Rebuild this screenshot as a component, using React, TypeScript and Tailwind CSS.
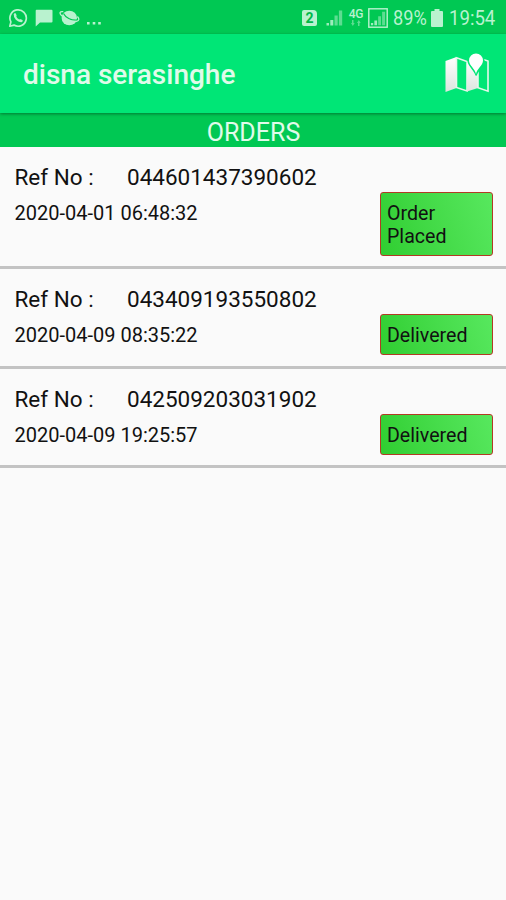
import React from 'react';

interface Order {
  refNo: string;
  date: string;
  status: string;
}

const orders: Order[] = [
  { refNo: '044601437390602', date: '2020-04-01 06:48:32', status: 'Order Placed' },
  { refNo: '043409193550802', date: '2020-04-09 08:35:22', status: 'Delivered' },
  { refNo: '042509203031902', date: '2020-04-09 19:25:57', status: 'Delivered' },
];

const SignalBars: React.FC = () => (
  <>
    <path d="M0.5 14H3v2.5H0.5z M4.3 11h3v5.5h-3z" fill="currentColor" opacity="0.85" />
    <path d="M8.5 6.5h3.2v10H8.5z M12.9 1.5h3.3v15h-3.3z" fill="currentColor" opacity="0.5" />
  </>
);

const StatusBar: React.FC = () => (
  <div className="flex h-[34px] items-center justify-between bg-[#00c853] pl-2 pr-[11px] pt-px text-[#b9f2cf]">
    <div className="flex items-center">
      <svg className="h-5 w-5" viewBox="0 0 20 20" fill="none" stroke="currentColor">
        <path strokeWidth="1.7" strokeLinejoin="round" d="M1.8 18.2l1.1-4.3A8.2 8.2 0 1 1 6 17.1z" />
        <path strokeWidth="2.2" strokeLinecap="round" d="M6.9 6.5c-.5 3.2 3 6.7 6.3 6.6" />
        <path strokeWidth="2.4" strokeLinecap="round" d="M7 6.6l.4 1M12.3 12.4l1.2.5" />
      </svg>
      <svg className="ml-[7px] h-[18px] w-[18px]" viewBox="0 0 18 18" fill="currentColor">
        <path d="M1.5.8h15q1 0 1 1v10.8q0 1-1 1H5L.7 17.6V1.8q0-1 .8-1z" />
      </svg>
      <svg className="ml-[6px] h-[18px] w-[21px]" viewBox="0 0 21 18">
        <ellipse cx="10.3" cy="9" rx="7.7" ry="7.3" fill="currentColor" />
        <path d="M4.5 4.5C6.5 8.8 13 12 18.5 11" fill="none" stroke="#00c853" strokeWidth="1.2" />
        <path d="M4.3 2.7C.6 2 .2 4 2.3 6.4c3.3 3.8 10.2 6.9 15.2 5.9 3-.6 2.9-2.6.9-4.8" fill="none" stroke="currentColor" strokeWidth="1.3" />
      </svg>
      <svg className="ml-[6px] mt-[12px] h-[3px] w-[16px]" viewBox="0 0 16 3" fill="currentColor">
        <path d="M1 0h2.6v2.6H1z M6.7 0h2.6v2.6H6.7z M12.2 0h2.6v2.6h-2.6z" />
      </svg>
    </div>

    <div className="flex items-center">
      <div className="mr-[9px] flex h-[16px] w-[15px] items-center justify-center rounded-[2px] rounded-tr-[4px] bg-[#b9f2cf] text-[14px] font-bold leading-none text-[#00b84a]">2</div>
      <svg className="h-[18px] w-[17px]" viewBox="0 0 17 18"><SignalBars /></svg>
      <div className="ml-[6px] flex w-[14px] flex-col items-center">
        <span className="text-[12px] font-medium leading-[11px] tracking-tight">4G</span>
        <svg className="h-[6px] w-[10px]" viewBox="0 0 10 6" fill="currentColor" opacity="0.5">
          <path d="M1 0h1.5v3h1.2L1.8 6 0 3h1zM7 6h1.5V3h1.2L7.8 0 6 3h1z" />
        </svg>
      </div>
      <svg className="ml-[5px] h-[20px] w-[20px]" viewBox="0 0 20 20">
        <rect x="0.8" y="0.8" width="18.4" height="18.4" fill="none" stroke="currentColor" strokeWidth="1.4" />
        <g transform="translate(2.5 2.5) scale(0.9)"><SignalBars /></g>
      </svg>
      <span className="ml-[5px] w-[34px] origin-left scale-x-[0.91] whitespace-nowrap text-[20px] leading-6">89%</span>
      <svg className="ml-[4px] h-[18px] w-[12px]" viewBox="0 0 12 18" fill="currentColor">
        <path d="M3.5 0h5v2H11q1 0 1 1v14q0 1-1 1H1q-1 0-1-1V3q0-1 1-1h2.5z" />
      </svg>
      <span className="ml-[6px] w-[46px] origin-left scale-x-[0.93] whitespace-nowrap text-[20px] leading-6">19:54</span>
    </div>
  </div>
);

const MapIcon: React.FC = () => (
  <svg className="h-[42px] w-[46px]" viewBox="0 0 46 42">
    <defs>
      <linearGradient id="paper" x1="0" y1="0" x2="0" y2="1">
        <stop offset="0" stopColor="#ffffff" />
        <stop offset="1" stopColor="#dde5df" />
      </linearGradient>
    </defs>
    <path d="M1.5 8L12.5 4v31l-11 4z" fill="url(#paper)" />
    <path d="M12.5 4.8l10.500 3.700V38l-10.500-3.500z" fill="none" stroke="#e4f8eb" strokeWidth="1.6" />
    <path d="M23 8.5l11-4V35l-11 3.500z" fill="url(#paper)" />
    <path d="M34 4.800L44 8v30.200l-10-3.400z" fill="none" stroke="#e4f8eb" strokeWidth="1.6" />
    <path d="M32 22.500c-1-5-8-9.800-8-15a8 8 0 0 1 16 0c0 5.200-6.500 10-8 15z" fill="#00e676" stroke="#00e676" strokeWidth="1.2" />
    <path d="M32 21c-1-5.500-7-8.500-7-13.500a7 7 0 0 1 14 0c0 5-6 8-7 13.500z" fill="#ffffff" />
  </svg>
);

const OrderRow: React.FC<{ order: Order }> = ({ order }) => (
  <div className="border-b-[3px] border-[#c3c3c3] pb-[10.4px] pl-[14.5px] pr-[13px] pt-[17px] text-[#111111]">
    <div className="flex h-[28px] items-start text-[22.5px] leading-[27px]">
      <span className="w-[112.5px]">Ref No :</span>
      <span>{order.refNo}</span>
    </div>
    <div className="flex items-start justify-between">
      <span className="pt-[10px] text-[20px] leading-[23px]">{order.date}</span>
      <div className="w-[113px] rounded-[3px] border border-[#b23a24] bg-linear-70 from-[#2fce30] to-[#57e85e] pb-[7px] pl-[6px] pr-[30px] pt-[9px] text-[19.6px] leading-[23px]">
        {order.status}
      </div>
    </div>
  </div>
);

const App: React.FC = () => {
  return (
    <div className="min-h-screen w-full overflow-hidden bg-[#fafafa] font-['Roboto',sans-serif]">
      <StatusBar />
      <header className="relative flex h-[79px] items-center justify-between bg-[#00e676] pl-[23px] pr-[16px] shadow-[0_1px_3px_rgba(0,0,0,0.4)]">
        <h1 className="pt-[3px] text-[28px] font-medium leading-8 text-[#e0fbea]">disna serasinghe</h1>
        <MapIcon />
      </header>
      <div className="flex h-[34px] items-center justify-center bg-[#00c853] pl-px pt-[4px] text-[25px] leading-none text-[#e0fbea]">ORDERS</div>
      <main>
        {orders.map((order) => (
          <OrderRow key={order.refNo} order={order} />
        ))}
      </main>
    </div>
  );
};

export default App;
